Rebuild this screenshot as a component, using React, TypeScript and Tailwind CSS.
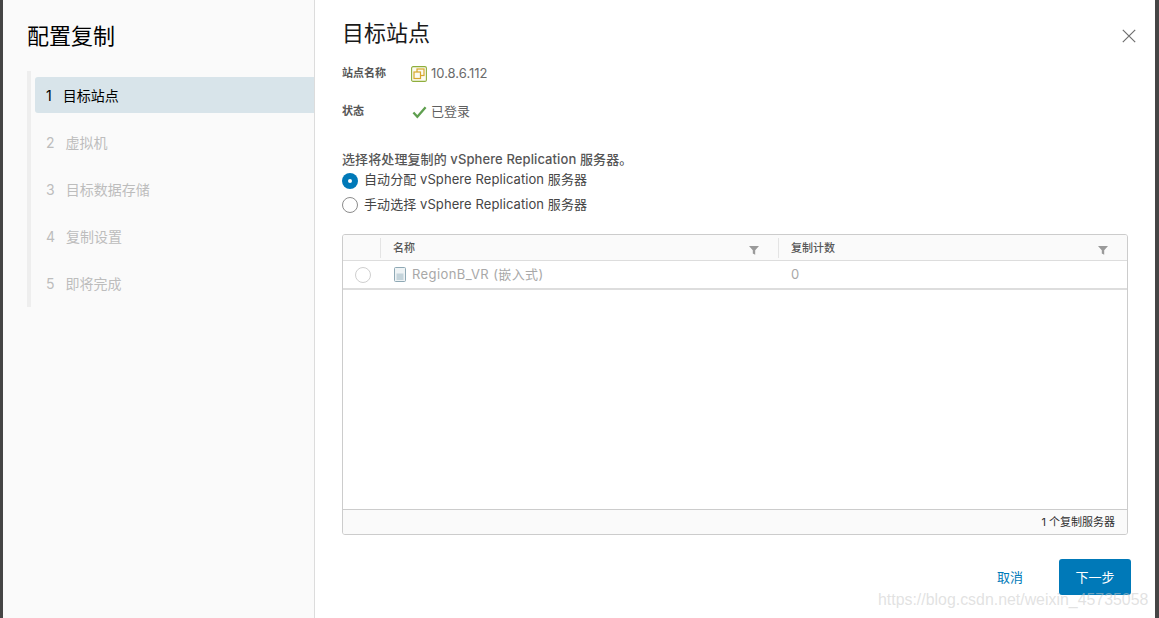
const font = { fontFamily: '"Inter", "Noto Sans CJK SC", sans-serif' };

const steps = ['虚拟机', '目标数据存储', '复制设置', '即将完成'];

function FilterIcon({ className }: { className: string }) {
  return (
    <svg viewBox="0 0 10 10" className={className} fill="#9a9a9a">
      <path d="M0 1h10L6.2 5.2V9.8L3.8 8.4V5.2z" />
    </svg>
  );
}

function Radio({ checked, disabled }: { checked?: boolean; disabled?: boolean }) {
  if (checked) {
    return (
      <span className="flex h-4 w-4 shrink-0 items-center justify-center rounded-full bg-[#0079b8]">
        <span className="h-1 w-1 rounded-full bg-white" />
      </span>
    );
  }
  return <span className={`h-4 w-4 shrink-0 rounded-full border bg-white ${disabled ? 'border-[#cfcfcf]' : 'border-[#8c8c8c]'}`} />;
}

export default function App() {
  return (
    <div style={font} className="relative flex h-[618px] w-[1159px] overflow-hidden bg-[#454545] pl-[3px] pr-[4px]">
      {/* left nav */}
      <aside className="h-full w-[312px] shrink-0 border-r border-[#dcdcdc] bg-[#fafafa] pl-[24px] pt-[20px]">
        <h1 className="text-[22px] leading-[32px] text-black">配置复制</h1>
        <div className="mt-[19px] h-[236px] border-l-4 border-[#eeeeee] pl-[4px] pt-[6px]">
          <div className="flex h-[36px] items-center gap-[11px] rounded-l-[3px] bg-[#d8e4ea] pl-[11px] text-[14px] text-black">
            <span>1</span>
            <span>目标站点</span>
          </div>
          {steps.map((s, i) => (
            <div key={s} className="mt-[11px] flex h-[36px] items-center gap-[11px] pl-[11px] text-[14px] text-[#bdbdbd]">
              <span>{i + 2}</span>
              <span>{s}</span>
            </div>
          ))}
        </div>
      </aside>

      {/* content */}
      <main className="flex h-full min-w-0 flex-1 flex-col bg-white pl-[27px] pr-[24px] pt-[17px]">
        <div className="flex h-[32px] items-center justify-between">
          <h2 className="text-[22px] leading-[32px] text-[#1a1a1a]">目标站点</h2>
          <svg viewBox="0 0 14 14" className="mr-[-5px] mt-[6px] h-[14px] w-[14px]" stroke="#6f6f6f" strokeWidth="1.2" fill="none">
            <path d="M0.8 0.8l12.4 12.4M13.2 0.8L0.8 13.2" />
          </svg>
        </div>

        <div className="mt-[13px] flex h-[24px] items-center">
          <span className="w-[69px] -translate-y-px text-[11px] font-semibold leading-none text-[#565656]">站点名称</span>
          <svg viewBox="0 0 16 16" className="h-4 w-4" fill="none">
            <rect x="0.6" y="0.6" width="14.8" height="14.8" rx="1.5" stroke="#8fae3c" strokeWidth="1.1" fill="#fbfbf0" />
            <rect x="6" y="3" width="7" height="6.5" stroke="#d7a72c" strokeWidth="1.2" />
            <rect x="3" y="6" width="6.5" height="6.5" stroke="#d7a72c" strokeWidth="1.2" fill="#fbfbf0" />
          </svg>
          <span className="ml-[4px] text-[13px] text-[#6a6a6a]">10.8.6.112</span>
        </div>
        <div className="mt-[14px] flex h-[24px] items-center">
          <span className="w-[70px] -translate-y-px text-[11px] font-semibold leading-none text-[#565656]">状态</span>
          <svg viewBox="0 0 16 14" className="h-[14px] w-[15px]" fill="none" stroke="#5f9f4f" strokeWidth="2.5">
            <path d="M1.5 7.5l4.2 4.5L14.5 2" />
          </svg>
          <span className="ml-[4px] text-[13px] text-[#5f5f5f]">已登录</span>
        </div>

        <p className="mt-[27px] -translate-y-px text-[13px] font-medium leading-[18px] tracking-[0.1px] text-[#565656]">选择将处理复制的 vSphere Replication 服务器。</p>
        <div className="flex h-[24px] items-center gap-[6px] text-[13px] tracking-[0.08px] text-[#454545]">
          <Radio checked />
          <span className="-translate-y-px">自动分配 vSphere Replication 服务器</span>
        </div>
        <div className="flex h-[24px] items-center gap-[6px] text-[13px] tracking-[0.08px] text-[#454545]">
          <Radio />
          <span>手动选择 vSphere Replication 服务器</span>
        </div>

        {/* grid */}
        <div className="mr-[3px] mt-[17px] flex h-[301px] flex-col overflow-hidden rounded-[3px] border border-[#cccccc]">
          <div className="flex h-[26px] shrink-0 items-center border-b border-[#dddddd] bg-[#fafafa] text-[11px] font-medium text-[#565656]">
            <div className="h-[20px] w-[38px] border-r border-[#e4e4e4]" />
            <div className="flex h-[20px] w-[398px] items-center justify-between border-r border-[#e4e4e4] pl-[12px] pr-[19px]">
              <span className="translate-y-px">名称</span>
              <FilterIcon className="mt-[4px] h-[10px] w-[10px]" />
            </div>
            <div className="flex h-[20px] flex-1 items-center justify-between pl-[12px] pr-[19px]">
              <span className="translate-y-px">复制计数</span>
              <FilterIcon className="mt-[4px] h-[10px] w-[10px]" />
            </div>
          </div>
          <div className="flex h-[29px] shrink-0 items-center border-b-2 border-[#dddddd] text-[13px] text-[#a8a8a8]">
            <div className="flex w-[38px] justify-center pl-[2px]">
              <Radio disabled />
            </div>
            <div className="flex w-[398px] items-center gap-[6px] pl-[13px]">
              <svg viewBox="0 0 12 15" className="h-[15px] w-[12px]" fill="none">
                <rect x="0.5" y="0.5" width="11" height="14" rx="1" stroke="#8fa9b5" fill="#eef3f5" />
                <rect x="2.5" y="6.5" width="7" height="6.5" fill="#c4d4db" />
              </svg>
              <span className="tracking-[0.4px]">RegionB_VR (嵌入式)</span>
            </div>
            <div className="pl-[12px]">0</div>
          </div>
          <div className="flex-1" />
          <div className="flex h-[25px] shrink-0 items-center justify-end border-t border-[#cccccc] bg-[#fafafa] pr-[12px] pt-[1px] text-[11px] text-[#2f2f2f]">
            1 个复制服务器
          </div>
        </div>

        <div className="mt-[24px] flex items-center justify-end">
          <button className="mr-[36px] pt-[1px] text-[13px] text-[#0079b8]">取消</button>
          <button className="h-[36px] w-[72px] rounded-[3px] bg-[#0079b8] pt-[1px] text-[13px] text-white">下一步</button>
        </div>
      </main>

      {/* blog watermark */}
      <span
        style={{ fontFamily: '"Liberation Sans", sans-serif' }}
        className="absolute left-[878px] top-[590px] text-[15.9px] leading-[20px] text-[#c9c9c9]/55"
      >
        https://blog.csdn.net/weixin_45735058
      </span>
    </div>
  );
}
